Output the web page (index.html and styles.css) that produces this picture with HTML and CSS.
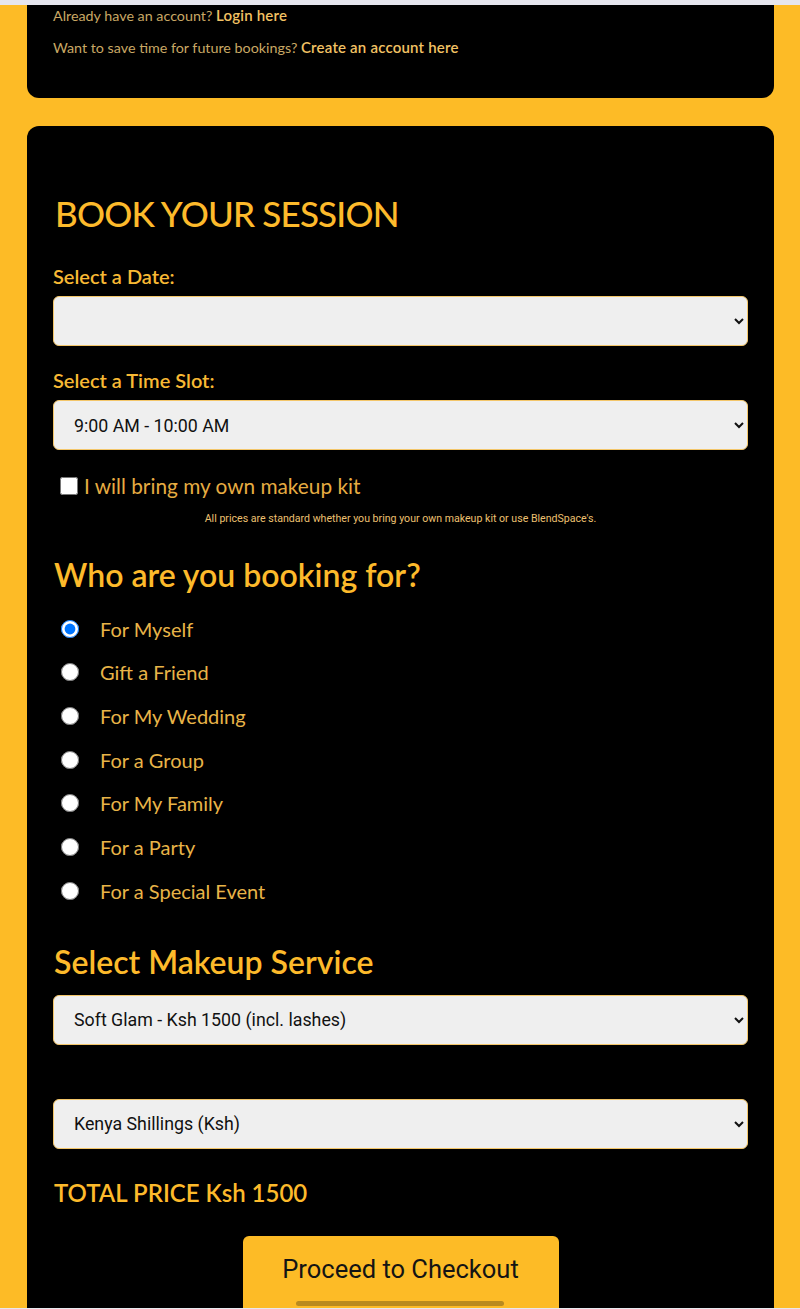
FILE: index.html
```html
<!doctype html>
<html>
<head>
<title>BlendSpace - Book Your Session</title>
    <link rel="stylesheet" href="styles.css">
</head>
<body>
<div class="top-bar"></div>
<div class="page">
    <div class="card account-card">
        <p class="account-line">Already have an account? <a class="account-link" href="#">Login here</a></p>
        <p class="account-line">Want to save time for future bookings? <a class="account-link" href="#">Create an account here</a></p>
    </div>
    <div class="card booking-card">
        <form onsubmit="return false;" id="bookingForm">
            <h2 class="book-title">BOOK YOUR SESSION</h2>
            <label for="dateSelect" class="field-label">Select a Date:</label>
            <select class="book-select" id="dateSelect"></select>
            <label for="timeSelect" class="field-label label-gap">Select a Time Slot:</label>
            <select class="book-select" id="timeSelect">
                <option>9:00 AM - 10:00 AM</option>
                <option>10:00 AM - 11:00 AM</option>
            </select>
            <div class="kit-row">
                <input type="checkbox" id="ownKit" class="kit-check">
                <label for="ownKit" class="kit-label">I will bring my own makeup kit</label>
            </div>
            <p class="price-note">All prices are standard whether you bring your own makeup kit or use BlendSpace's.</p>

            <h3 class="section-title who-title">Who are you booking for?</h3>
            <ul class="radio-list">
                <li class="radio-item"><input type="radio" name="bookingFor" id="bf1" checked><label for="bf1">For Myself</label></li>
                <li class="radio-item"><input type="radio" name="bookingFor" id="bf2"><label for="bf2">Gift a Friend</label></li>
                <li class="radio-item"><input type="radio" name="bookingFor" id="bf3"><label for="bf3">For My Wedding</label></li>
                <li class="radio-item"><input type="radio" name="bookingFor" id="bf4"><label for="bf4">For a Group</label></li>
                <li class="radio-item"><input type="radio" name="bookingFor" id="bf5"><label for="bf5">For My Family</label></li>
                <li class="radio-item"><input type="radio" name="bookingFor" id="bf6"><label for="bf6">For a Party</label></li>
                <li class="radio-item"><input type="radio" name="bookingFor" id="bf7"><label for="bf7">For a Special Event</label></li>
            </ul>

            <h3 class="section-title service-title">Select Makeup Service</h3>
            <select class="book-select service-select" id="serviceSelect">
                <option>Soft Glam - Ksh 1500 (incl. lashes)</option>
                <option>Full Glam - Ksh 2500 (incl. lashes)</option>
            </select>
            <select class="book-select currency-select" id="currencySelect">
                <option>Kenya Shillings (Ksh)</option>
                <option>US Dollars (USD)</option>
            </select>
            <p class="total-price">TOTAL PRICE Ksh 1500</p>
            <div class="btn-wrap">
                <button class="checkout-btn" type="button">Proceed to Checkout</button>
            </div>
        </form>
    </div>
</div>
<div class="nav-pill"></div>
</body>
</html>
```

FILE: styles.css
```css
html {
    background: #e8e8ee;
}
body,div,ul,li,h2,h3,p,form {
    margin:0;
    padding:0;
}
body {
    font-family: Lato, "Noto Sans", sans-serif;
    color: #e8b448;
}
ul,li{list-style: none;}
.top-bar{height: 5px;background: #e6e6ee;}
.page{background: #fdbb26;padding: 0 26px 13px 27px;}
.card{background: #000;border-radius: 12px;}
.account-card{border-radius: 0 0 12px 12px;padding: 0 26px 41px;}
.account-line{height: 20px;font-size: 14.3px;line-height: 20px;color: #c9a865;}
.account-line + .account-line{margin-top: 12px;}
.account-link{color: #f2c264;font-size: 15px;font-weight: 600;letter-spacing: 0.2px;text-decoration: none;}
.booking-card{margin-top: 28px;padding: 65px 26px 0;}
.book-title{font-size: 35px;line-height: 44px;font-weight: 500;letter-spacing: -0.8px;color: #fdba2b;margin-left: 2px;}
.field-label{display: block;font-size: 20px;line-height: 24px;font-weight: 600;color: #f8b934;margin-top: 29px;}
.field-label.label-gap{margin-top: 22px;}
.book-select{display: block;width: 100%;height: 50px;margin-top: 8px;padding: 0 16px;background: #efefef;border: 1px solid #f3c66a;border-radius: 6px;font-family: Roboto, sans-serif;font-size: 17.8px;color: #111;outline: none;}
.kit-row{display: flex;align-items: center;height: 24px;margin-top: 24px;}
.kit-check{width: 18px;height: 18px;margin: 0 6px 0 7px;}
.kit-label{font-size: 20.8px;line-height: 24px;font-weight: 400;color: #e6ac42;}
.price-note{text-align: center;font-family: Roboto, sans-serif;font-size: 10.6px;line-height: 14px;color: #edc070;margin-top: 14px;}
.section-title{font-size: 32px;line-height: 40px;font-weight: 600;color: #fdba2b;margin-left: 1px;}
.who-title{margin-top: 29px;}
.radio-list{margin-top: 12px;}
.radio-item{display: flex;align-items: center;height: 43.67px;}
.radio-item input{width: 18px;height: 18px;margin: 0 21px 0 8px;}
.radio-item label{font-size: 20px;line-height: 24px;color: #e8b448;}
.service-title{margin-top: 29px;}
.service-select{margin-top: 13px;}
.currency-select{margin-top: 54px;}
.total-price{font-size: 24px;line-height: 30px;font-weight: 600;color: #fdba2b;margin-top: 29px;margin-left: 1px;}
.btn-wrap{text-align: center;margin-top: 28px;margin-bottom: -27px;}
.checkout-btn{background: #fdbb26;border: 0 none;border-radius: 6px;width: 316px;padding: 20px 0 40px;font-family: Roboto, sans-serif;font-size: 25.5px;line-height: 26px;color: #141414;cursor: pointer;position: relative;}
.nav-pill{position: fixed;left: 296px;bottom: 3px;width: 208px;height: 5px;border-radius: 3px;background: #b98a1e;}
```
